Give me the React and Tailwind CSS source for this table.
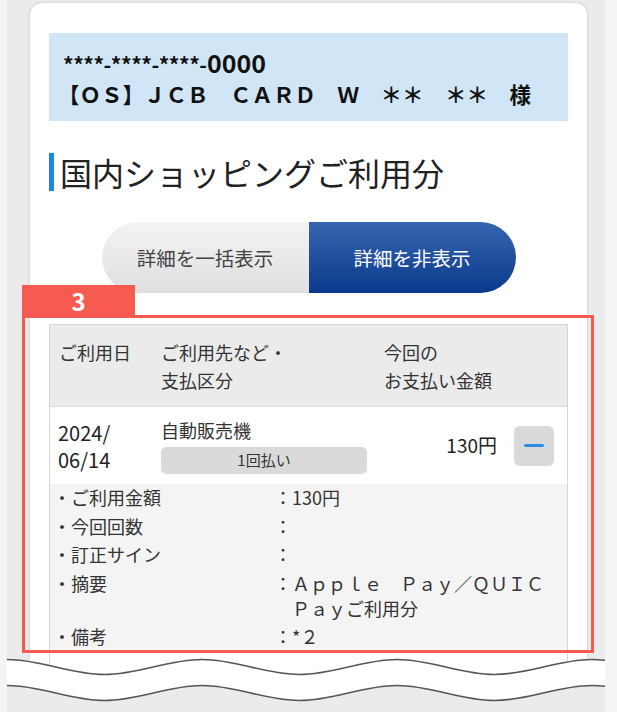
import React from 'react';

// sine-like wave built from cubic segments, starts on a crest at x=0
const wavePath = (cy, amp, width, period) => {
    const h = period / 2;
    let d = `M0 ${cy - amp}`;
    let x = 0;
    let up = true;
    while (x < width) {
        const nx = x + h;
        const y1 = up ? cy - amp : cy + amp;
        const y2 = up ? cy + amp : cy - amp;
        d += ` C${x + h * 0.36} ${y1} ${nx - h * 0.36} ${y2} ${nx} ${y2}`;
        x = nx;
        up = !up;
    }
    return { d, end: x };
};

const TornEdge = () => {
    const W = 598;
    const H = 57;
    const top = wavePath(12, 7.5, W, 195);
    const bottom = wavePath(38, 7.5, W, 195);
    return (
        <svg
            className="absolute left-[7px] top-[655px]"
            width={W}
            height={H}
            viewBox={`0 0 ${W} ${H}`}
        >
            <path d={`${top.d} L${top.end} ${H} L0 ${H} Z`} fill="#ffffff" />
            <path d={`${bottom.d} L${bottom.end} ${H} L0 ${H} Z`} fill="#ebebeb" />
            <path d={top.d} fill="none" stroke="#555" strokeWidth="1.6" />
            <path d={bottom.d} fill="none" stroke="#555" strokeWidth="1.6" />
        </svg>
    );
};

const details = [
    { label: 'ご利用金額', value: '130円' },
    { label: '今回回数', value: '' },
    { label: '訂正サイン', value: '' },
    { label: '摘要', value: <>Ａｐｐｌｅ　Ｐａｙ／ＱＵＩＣ<br />Ｐａｙご利用分</> },
    { label: '備考', value: '*２' },
];

export default function App() {
    return (
        <div className="relative h-[712px] w-[617px] overflow-hidden bg-[#f4f4f4] font-['Noto_Sans_CJK_JP',sans-serif] text-[#222]">
            <div className="ml-[7px] mr-[12px] h-full bg-[#ebebeb] pl-[23px] pr-[18px] pt-[3px]">
                <div className="h-full rounded-t-[12px] bg-white px-[19px] pt-[30px] shadow-[0_0_3px_rgba(0,0,0,0.18)]">
                    {/* Card holder box */}
                    <div className="h-[88px] bg-[#d0e6f7] pl-[14px] pt-[14px] font-bold text-[#111]">
                        <div className="text-[21px] leading-[30px]">
                            <span className="tracking-[-0.5px]">****-****-****</span>-<span className="text-[25px]">0000</span>
                        </div>
                        <div className="-ml-[5px] text-[21.5px] leading-[30px]">【ＯＳ】ＪＣＢ　ＣＡＲＤ　Ｗ　＊＊　＊＊　様</div>
                    </div>

                    {/* Section heading */}
                    <div className="mt-[32px] flex h-[38px] items-center">
                        <div className="h-[38px] w-[5px] bg-[#1a87e0]" />
                        <h2 className="ml-[6px] text-[32px] leading-[38px] text-[#222]">国内ショッピングご利用分</h2>
                    </div>

                    {/* Toggle */}
                    <div className="mt-[31px] flex justify-center">
                        <button className="flex h-[71px] w-[207px] items-center justify-center rounded-l-full bg-gradient-to-b from-[#f3f3f3] to-[#e0e0e0] text-[19.5px] text-[#444]">
                            詳細を一括表示
                        </button>
                        <button className="flex h-[71px] w-[207px] items-center justify-center rounded-r-full bg-gradient-to-b from-[#3766b0] to-[#08398c] text-[19.5px] text-white">
                            詳細を非表示
                        </button>
                    </div>

                    {/* Table */}
                    <div className="mt-[31px] border border-[#d6d6d6] pb-[60px]">
                        <div className="flex h-[82px] border-b border-[#dcdcdc] bg-[#ebebeb] pl-[9px] pt-[13px] text-[18px] leading-[28px] text-[#333]">
                            <div className="w-[102px]">ご利用日</div>
                            <div className="w-[223px]">ご利用先など・<br />支払区分</div>
                            <div>今回の<br />お支払い金額</div>
                        </div>

                        <div className="flex h-[77px] items-center bg-white pl-[8px] pr-[13px]">
                            <div className="w-[103px] text-[20px] leading-[27px] text-[#222]">
                                <div>2024/</div>
                                <div>06/14</div>
                            </div>
                            <div className="w-[206px]">
                                <div className="text-[18px] leading-[24px] text-[#333]">自動販売機</div>
                                <div className="mt-[5px] flex h-[27px] items-center justify-center rounded-[5px] bg-[#dadada] text-[15px] text-[#333]">
                                    1回払い
                                </div>
                            </div>
                            <div className="flex-1 pr-[17px] text-right text-[19px] text-[#222]">130円</div>
                            <button className="flex h-[40px] w-[40px] items-center justify-center rounded-[6px] bg-[#d9d9d9]">
                                <span className="h-[3px] w-[20px] rounded-full bg-[#2b8de3]" />
                            </button>
                        </div>

                        <div className="bg-[#f4f4f4] pl-[3px] pt-[1px] text-[18px] leading-[25px] text-[#333]">
                            {details.map((row) => (
                                <div key={row.label} className="mb-[3.5px] flex">
                                    <div className="w-[221px]">・{row.label}</div>
                                    <div className="w-[18px]">：</div>
                                    <div>{row.value}</div>
                                </div>
                            ))}
                        </div>
                    </div>
                </div>
            </div>

            {/* Annotation overlay */}
            <div className="absolute left-[22px] top-[285px] flex h-[31px] w-[113px] items-center justify-center bg-[#f65a50] text-[24px] font-bold text-white">
                3
            </div>
            <div className="absolute left-[22px] top-[315px] h-[338px] w-[572px] border-[3px] border-[#f65a50]" />

            <TornEdge />
        </div>
    );
}
